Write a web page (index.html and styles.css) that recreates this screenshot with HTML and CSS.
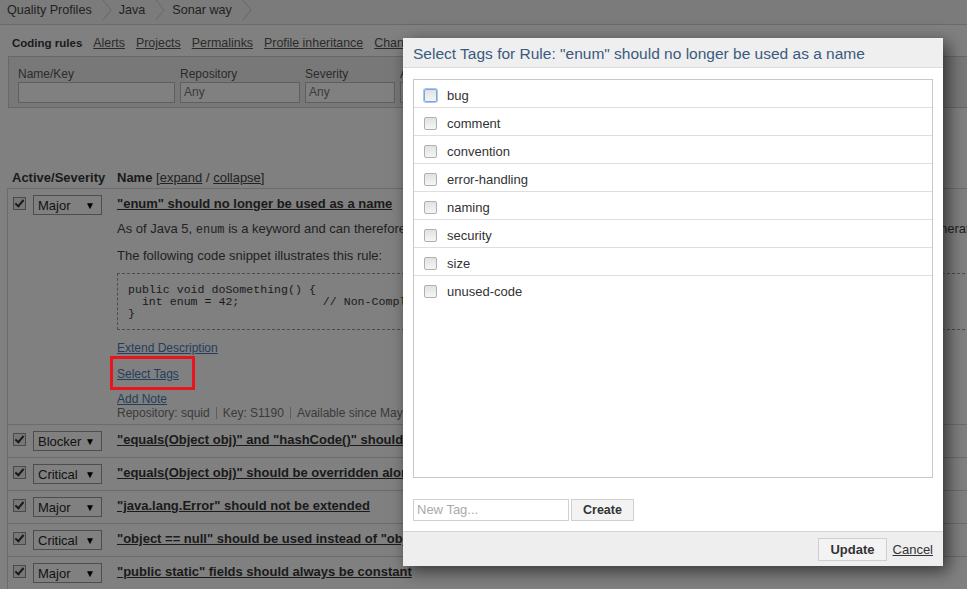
FILE: index.html
```html
<!DOCTYPE html>
<html>
<head>
<meta charset="utf-8">
<link rel="stylesheet" href="styles.css">
</head>
<body>
<div class="page">
  <div class="crumbs">
    <span>Quality Profiles</span>
    <svg class="chev" width="10" height="20" viewBox="0 0 10 20"><path d="M1 0 L9 10 L1 20" fill="none" stroke="#686868" stroke-width="1"/></svg>
    <span>Java</span>
    <svg class="chev" width="10" height="20" viewBox="0 0 10 20"><path d="M1 0 L9 10 L1 20" fill="none" stroke="#686868" stroke-width="1"/></svg>
    <span>Sonar way</span>
    <svg class="chev" width="10" height="20" viewBox="0 0 10 20"><path d="M1 0 L9 10 L1 20" fill="none" stroke="#686868" stroke-width="1"/></svg>
  </div>

  <div class="tabs">
    <b>Coding rules</b>
    <a>Alerts</a>
    <a>Projects</a>
    <a>Permalinks</a>
    <a>Profile inheritance</a>
    <a>Changelog</a>
  </div>

  <div class="filters">
    <div class="field"><label>Name/Key</label><div class="inp w1"></div></div>
    <div class="field"><label>Repository</label><div class="inp w2">Any</div></div>
    <div class="field"><label>Severity</label><div class="inp w3">Any</div></div>
    <div class="field"><label>Activation</label><div class="inp w3">Any</div></div>
  </div>

  <div class="rules">
    <div class="rules-head">
      <div class="col1">Active/Severity</div>
      <div class="col2">Name <span class="light">[<a>expand</a> / <a>collapse</a>]</span></div>
    </div>

    <div class="rule first">
      <div class="col1"><span class="chk"></span><div class="sel">Major<span class="arr">▼</span></div></div>
      <div class="col2">
        <a class="title">"enum" should no longer be used as a name</a>
        <p class="desc">As of Java 5, <code>enum</code> is a keyword and can therefore no longer be used as a name for variables, methods or classes without the Java compiler generating errors.</p>
        <p class="desc p2">The following code snippet illustrates this rule:</p>
        <pre class="code">public void doSomething() {
  int enum = 42;            // Non-Compliant
}</pre>
        <a class="lnk l1">Extend Description</a>
        <a class="lnk l2"><span class="mark">Select Tags</span></a>
        <a class="lnk l3">Add Note</a>
        <div class="meta"><span>Repository: squid</span><span>Key: S1190</span><span>Available since May 2013</span></div>
      </div>
    </div>

    <div class="rule">
      <div class="col1"><span class="chk"></span><div class="sel">Blocker<span class="arr">▼</span></div></div>
      <div class="col2"><a class="title">"equals(Object obj)" and "hashCode()" should be overridden in pairs</a></div>
    </div>
    <div class="rule">
      <div class="col1"><span class="chk"></span><div class="sel">Critical<span class="arr">▼</span></div></div>
      <div class="col2"><a class="title">"equals(Object obj)" should be overridden along with the "compareTo(T obj)" method</a></div>
    </div>
    <div class="rule">
      <div class="col1"><span class="chk"></span><div class="sel">Major<span class="arr">▼</span></div></div>
      <div class="col2"><a class="title">"java.lang.Error" should not be extended</a></div>
    </div>
    <div class="rule">
      <div class="col1"><span class="chk"></span><div class="sel">Critical<span class="arr">▼</span></div></div>
      <div class="col2"><a class="title">"object == null" should be used instead of "object.equals(null)"</a></div>
    </div>
    <div class="rule">
      <div class="col1"><span class="chk"></span><div class="sel">Major<span class="arr">▼</span></div></div>
      <div class="col2"><a class="title">"public static" fields should always be constant</a></div>
    </div>
  </div>
</div>

<div class="modal">
  <div class="modal-head">Select Tags for Rule: "enum" should no longer be used as a name</div>
  <div class="modal-body">
    <ul class="taglist">
      <li><span class="cb focus"></span>bug</li>
      <li><span class="cb"></span>comment</li>
      <li><span class="cb"></span>convention</li>
      <li><span class="cb"></span>error-handling</li>
      <li><span class="cb"></span>naming</li>
      <li><span class="cb"></span>security</li>
      <li><span class="cb"></span>size</li>
      <li><span class="cb"></span>unused-code</li>
    </ul>
    <div class="newtag">
      <div class="tag-input">New Tag...</div>
      <div class="btn">Create</div>
    </div>
  </div>
  <div class="modal-foot">
    <div class="btn">Update</div>
    <a class="cancel">Cancel</a>
  </div>
</div>
</body>
</html>
```

FILE: styles.css
```css
/* The page behind the dialog is drawn in its dimmed (modal-open) colours. */
html {
  background: #808080;
}
html, body {
  margin: 0;
  padding: 0;
  overflow: hidden;
}
body {
  width: 967px;
  height: 589px;
  font-family: "Liberation Sans", Arial, sans-serif;
  font-size: 13px;
  color: #1a1a1a;
  background-color: #808080;
  position: relative;
}
.page {
  width: 1300px;
  height: 589px;
  background-color: #808080;
}

/* breadcrumb */
.crumbs {
  height: 20px;
  padding: 0 0 4px 7px;
  background-color: #7b7b7b;
  border-bottom: 1px solid #6a6a6a;
  display: flex;
  align-items: center;
  color: #222;
  font-size: 12.6px;
}
.chev {
  margin: 0 7px 0 10px;
  display: block;
}

/* tabs */
.tabs {
  margin-top: 10px;
  padding-left: 12px;
  display: flex;
  gap: 11px;
  font-size: 12.4px;
  line-height: 16px;
  color: #222;
}
.tabs b { color: #1a1a1a; font-size: 11.5px; }
.tabs a { color: #2b2b2b; text-decoration: underline; }

/* filters */
.filters {
  margin: 5px 0 0 8px;
  height: 50px;
  padding: 0 0 0 9px;
  background-color: #787878;
  border: 1px solid #686868;
  display: flex;
  gap: 5px;
}
.field {
  display: flex;
  flex-direction: column;
  padding-top: 10px;
}
.field label {
  font-size: 12px;
  line-height: 15px;
  height: 15px;
  color: #2b2b2b;
}
.inp {
  height: 19px;
  border: 1px solid #5f5f5f;
  background-color: #808080;
  font-size: 12px;
  line-height: 19px;
  padding-left: 3px;
  color: #3a3a3a;
}
.w1 { width: 152px; }
.w2 { width: 115px; }
.w3 { width: 85px; }

/* rules */
.rules {
  margin: 62px 0 0 7px;
}
.rules-head {
  display: flex;
  line-height: 16px;
  height: 18px;
  font-weight: bold;
  color: #1a1a1a;
}
.rules-head .col1 { padding-left: 5px; }
.light { font-weight: normal; color: #222; }
.light a { text-decoration: underline; color: #222; }

.col1 {
  width: 105px;
  padding-left: 4px;
  flex: none;
  display: flex;
  align-items: flex-start;
}
.col2 { flex: 1; }

.rule {
  display: flex;
  border-top: 1px solid #6c6c6c;
  border-left: 1px solid #6c6c6c;
  padding: 6px 0 6px 0;
  height: 20px;
}
.rule.first {
  height: auto;
  padding-bottom: 5px;
}

.chk {
  width: 11px;
  height: 11px;
  border: 1px solid #4a4a4a;
  background-color: #777;
  margin: 2px 7px 0 1px;
  position: relative;
  flex: none;
}
.chk::after {
  content: "";
  position: absolute;
  left: 3px;
  top: 0px;
  width: 3px;
  height: 7px;
  border: solid #1a1a1a;
  border-width: 0 2px 2px 0;
  transform: rotate(40deg);
}
.sel {
  width: 63px;
  height: 18px;
  border: 1px solid #4d4d4d;
  background-color: #808080;
  padding-left: 4px;
  font-size: 13px;
  line-height: 19px;
  color: #111;
  position: relative;
}
.arr {
  position: absolute;
  right: 6px;
  top: 0;
  font-size: 10px;
  color: #000;
}

.title {
  display: block;
  font-weight: bold;
  font-size: 13px;
  line-height: 18px;
  color: #1a1a1a;
  text-decoration: underline;
  white-space: nowrap;
}
.desc {
  margin: 8px 0 0 0;
  font-size: 13px;
  line-height: 16px;
  color: #222;
  white-space: nowrap;
}
.desc.p2 { margin-top: 10px; }
.desc code {
  font-family: "Liberation Mono", "Courier New", monospace;
  font-size: 12px;
}
.code {
  margin: 9px 0 0 0;
  border: 1px dashed #4d4d4d;
  padding: 10px 10px 9px 10px;
  font-family: "Liberation Mono", "Courier New", monospace;
  font-size: 11.6px;
  line-height: 12px;
  color: #1a1a1a;
}
.lnk {
  display: block;
  width: max-content;
  font-size: 12px;
  line-height: 16px;
  color: #253d5b;
  text-decoration: underline;
}
.l1 { margin-top: 10px; }
.l2 { margin-top: 10px; }
.l3 { margin-top: 10px; line-height: 15px; }
.mark { position: relative; }
.mark::after {
  content: "";
  position: absolute;
  left: -7px;
  top: -11px;
  width: 79px;
  height: 28px;
  border: 3px solid #e8151d;
}
.meta {
  font-size: 12px;
  line-height: 12px;
  height: 12px;
  color: #3a3a3a;
  display: flex;
}
.meta span + span {
  border-left: 1px solid #5e5e5e;
  margin-left: 6px;
  padding-left: 6px;
}

/* modal */
.modal {
  position: absolute;
  left: 403px;
  top: 38px;
  width: 540px;
  height: 528px;
  background-color: #fff;
  z-index: 30;
  box-shadow: 5px 5px 16px rgba(0, 0, 0, 0.6);
  display: flex;
  flex-direction: column;
}
.modal-head {
  height: 29px;
  background-color: #efefef;
  border-bottom: 1px solid #dcdcdc;
  padding-left: 10px;
  font-size: 15.5px;
  line-height: 31px;
  color: #3a5a80;
  white-space: nowrap;
}
.modal-body {
  flex: 1;
  padding: 11px 10px 0 10px;
}
.taglist {
  list-style: none;
  margin: 0;
  padding: 0;
  height: 397px;
  border: 1px solid #c8c8c8;
}
.taglist li {
  height: 24px;
  padding-top: 3px;
  display: flex;
  align-items: center;
  padding-left: 10px;
  font-size: 13px;
  color: #333;
}
.taglist li + li {
  border-top: 1px solid #dedede;
}
.cb {
  width: 11px;
  height: 11px;
  border: 1px solid #b0b0b0;
  border-radius: 2px;
  background: linear-gradient(#e2e2e2, #f5f5f5);
  margin-right: 10px;
  flex: none;
}
.cb.focus {
  border-color: #7aa6e6;
  box-shadow: 0 0 0 1px #a9c6f0;
}
.newtag {
  margin-top: 21px;
  display: flex;
  gap: 2px;
}
.tag-input {
  width: 151px;
  height: 20px;
  border: 1px solid #cfcfcf;
  padding-left: 3px;
  font-size: 13px;
  line-height: 20px;
  color: #aaa;
}
.btn {
  height: 20px;
  padding: 0 11px;
  border: 1px solid #cfcfcf;
  background-color: #f3f3f3;
  font-weight: bold;
  font-size: 13px;
  line-height: 21px;
  color: #333;
}
.newtag .btn { width: 39px; font-size: 12.5px; }
.modal-foot {
  height: 34px;
  border-top: 1px solid #d6d6d6;
  background-color: #eeeeee;
  display: flex;
  align-items: center;
  justify-content: flex-end;
  padding-right: 10px;
  gap: 6px;
}
.modal-foot .btn {
  height: 21px;
  padding: 0 11px;
}
.cancel {
  font-size: 13px;
  line-height: 21px;
  color: #333;
  text-decoration: underline;
}
```
